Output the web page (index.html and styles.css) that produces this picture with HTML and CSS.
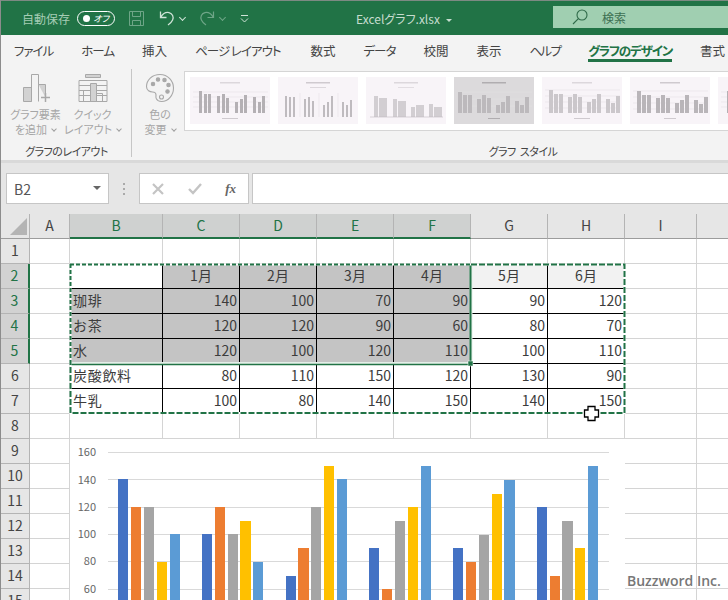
FILE: index.html
```html
<!DOCTYPE html>
<html lang="ja">
<head>
    <meta charset="UTF-8">
    <title>Excelグラフ.xlsx</title>
    <link rel="stylesheet" href="styles.css">
</head>
<body>
<svg class="defs" width="0" height="0">
    <symbol id="thumb-a" viewBox="0 0 80 47">
        <rect x="30" y="5" width="20" height="1.500" fill="#dcd7dc"/>
        <path d="M3 15H78M3 20H78M3 25H78M3 30H78" stroke="#e6e0e6" stroke-width=".6"/>
        <path d="M9 14h3v22H9zM14 17h3v19h-3zM18 17h3v19h-3zM27 19h3v17h-3zM32 17h3v19h-3zM36 21h3v15h-3zM45 25h3v11h-3zM50 22h3v14h-3zM54 18h3v18h-3zM63 20h3v16h-3zM68 25h3v11h-3zM72 19h3v17h-3z" fill="#b4b0b4"/>
        <rect x="32" y="41" width="16" height="1" fill="#cfcacf"/>
    </symbol>
    <symbol id="thumb-b" viewBox="0 0 80 47">
        <rect x="28" y="5" width="24" height="1.500" fill="#cfcacf"/>
        <rect x="32" y="10" width="16" height="1" fill="#dcd7dc"/>
        <path d="M22 16V40M41 16V40M60 16V40" stroke="#e6e0e6" stroke-width=".6"/>
        <path d="M7 19h2v21H7zM11 20h2v20h-2zM15 20h2v20h-2zM26 22h2v18h-2zM30 20h2v20h-2zM34 24h2v16h-2zM45 28h2v12h-2zM49 25h2v15h-2zM53 19h2v21h-2zM64 25h2v15h-2zM68 28h2v12h-2zM72 23h2v17h-2z" fill="#bfbbbf"/>
    </symbol>
    <symbol id="thumb-c" viewBox="0 0 80 47">
        <rect x="28" y="5" width="24" height="1.500" fill="#dcd7dc"/>
        <rect x="32" y="10" width="16" height="1" fill="#e2dde2"/>
        <path d="M8 19h4v21H8zM13 21h8v19h-8zM27 22h4v18h-4zM32 24h8v16h-8zM45 30h4v10h-4zM50 28h8v12h-8zM63 27h4v13h-4zM68 30h8v10h-8z" fill="#d2ced2"/>
        <path d="M4 40H77" stroke="#bfbbbf" stroke-width=".6"/>
    </symbol>
    <symbol id="thumb-d" viewBox="0 0 80 47">
        <rect x="28" y="5" width="24" height="1.500" fill="#b0adb0"/>
        <path d="M4 15H78M4 22H78M4 29H78" stroke="#e2e0e2" stroke-width=".6"/>
        <path d="M4 15h4v21H4zM9 18h4v18H9zM14 18h4v18h-4zM23 22h4v14h-4zM28 18h4v18h-4zM33 21h4v15h-4zM42 28h4v8h-4zM47 25h4v11h-4zM52 19h4v17h-4zM61 24h4v12h-4zM66 28h4v8h-4zM71 20h4v16h-4z" fill="#bcb9bc"/>
        <rect x="34" y="41" width="12" height="1" fill="#b0adb0"/>
    </symbol>
    <symbol id="thumb-e" viewBox="0 0 80 47">
        <rect x="30" y="5" width="20" height="1.500" fill="#dcd7dc"/>
        <path d="M3 13H78M3 19H78M3 25H78M3 31H78" stroke="#e6e0e6" stroke-width=".6"/>
        <path d="M7 13h4v23H7zM12 17h4v19h-4zM17 17h4v19h-4zM26 20h4v16h-4zM31 17h4v19h-4zM36 20h4v16h-4zM45 25h4v11h-4zM50 22h4v14h-4zM55 17h4v19h-4zM64 22h4v14h-4zM69 26h4v10h-4zM74 19h4v17h-4z" fill="#cbc7cb"/>
        <rect x="32" y="41" width="16" height="1" fill="#cfcacf"/>
    </symbol>
    <symbol id="thumb-f" viewBox="0 0 80 47">
        <rect x="30" y="5" width="20" height="1.500" fill="#cfcacf"/>
        <path d="M3 14H78M3 20H78M3 26H78M3 32H78" stroke="#e6e0e6" stroke-width=".6"/>
        <path d="M7 14h4v22H7zM12 18h4v18h-4zM17 18h4v18h-4zM26 21h4v15h-4zM31 18h4v18h-4zM36 21h4v15h-4zM45 26h4v10h-4zM50 23h4v13h-4zM55 18h4v18h-4zM64 23h4v13h-4zM69 27h4v9h-4zM74 20h4v16h-4z" fill="#b9b5b9"/>
        <rect x="34" y="41" width="12" height="1" fill="#cfcacf"/>
    </symbol>
</svg>

<div class="window">
    <header class="titlebar">
        <span class="autosave">自動保存</span>
        <span class="toggle"><i class="toggle-dot"></i><b>オフ</b></span>
        <svg class="qat save" width="17" height="17" viewBox="0 0 17 17" fill="none" stroke="#6ea587"><path d="M1.500 1.500h14v14h-14zM4.500 1.500v5h8v-5M4.500 15.500v-5h8v5"/></svg>
        <svg class="qat undo" width="16" height="16" viewBox="0 0 16 16" fill="none" stroke="#cfe3d7" stroke-width="1.300"><path d="M1.500 1.500v6h6M1.800 7.200C4 3.500 7 2 10 2.600c3.500.8 5 4.300 3.600 7.400-.8 1.800-2.400 3.500-4.600 5"/></svg>
        <span class="chev light"></span>
        <svg class="qat redo" width="16" height="16" viewBox="0 0 16 16" fill="none" stroke="#6ea587" stroke-width="1.200"><path d="M14.500 1.500v6h-6M14.200 7.200C12 3.500 9 2 6 2.600 2.500 3.400 1 6.900 2.400 10c.8 1.800 2.400 3.500 4.600 5"/></svg>
        <span class="chev dim"></span>
        <svg class="qat more" width="9" height="9" viewBox="0 0 9 9" fill="none" stroke="#cfe3d7"><path d="M1 1.500h7"/><path d="M1 4.500l3.500 3.500 3.500-3.500"/></svg>
        <span class="doc-name">Excelグラフ.xlsx<i class="doc-arrow"></i></span>
        <div class="search">
            <svg width="16" height="16" viewBox="0 0 16 16" fill="none" stroke="#2f6a49" stroke-width="1.100"><circle cx="10" cy="6" r="5"/><path d="M6.400 9.600L1 15"/></svg>
            <span>検索</span>
        </div>
    </header>

    <nav class="tabs">
        <span class="kana">ファイル</span>
        <span class="kana">ホーム</span>
        <span>挿入</span>
        <span class="kana-long">ページ レイアウト</span>
        <span>数式</span>
        <span class="kana">データ</span>
        <span>校閲</span>
        <span>表示</span>
        <span class="kana-tight">ヘルプ</span>
        <span class="active">グラフのデザイン</span>
        <span>書式</span>
    </nav>

    <section class="ribbon">
        <div class="group layout-group">
            <div class="group-body">
                <div class="big-btn wide">
                    <svg width="30" height="30" viewBox="0 0 30 30" fill="none" stroke="#a8a8a8">
                        <path d="M2.500 14.500h8v14h-8z" fill="#d2d2d2"/>
                        <path d="M10.500 28.500v-27h7v27"/>
                        <path d="M17.500 11.500h7v13" fill="#d2d2d2"/>
                        <path d="M20 24.500h9M24.500 20v9" stroke-width="1.500"/>
                    </svg>
                    <span>グラフ要素<br>を追加<i class="chev grey"></i></span>
                </div>
                <div class="big-btn wide">
                    <svg width="30" height="30" viewBox="0 0 30 30" fill="none" stroke="#a8a8a8">
                        <path d="M7.500 1.500h15v3h-15z" fill="#d2d2d2"/>
                        <path d="M1 7.500h28M1 12.500h28M1 17.500h28M1 22.500h28M1 28.500h28M1 7.500v21M29 7.500v21"/>
                        <path d="M12.500 10.500h6v18h-6z" fill="#d2d2d2"/>
                        <path d="M5.500 17.500h7v11h-7zM18.500 20.500h6v8h-6z"/>
                    </svg>
                    <span>クイック<br>レイアウト<i class="chev grey"></i></span>
                </div>
            </div>
            <div class="group-label">グラフのレイアウト</div>
        </div>
        <div class="group style-group">
            <div class="group-body">
                <div class="big-btn narrow">
                    <svg width="30" height="30" viewBox="0 0 30 30" fill="none" stroke="#a8a8a8" stroke-width="1.100">
                        <path d="M15 1.500C7 1.500 1.500 7 1.500 13.500c0 4 3.500 5.500 6 5.500 2 0 3.500 1 3.500 3 0 1.500-.5 2.500.5 4 1 1.700 3 2.500 5 2.500 7 0 12-6.500 12-13.500S23 1.500 15 1.500z"/>
                        <circle cx="8" cy="11" r="1.700" fill="#a8a8a8"/>
                        <circle cx="13" cy="6.500" r="1.700" fill="#a8a8a8"/>
                        <circle cx="19.500" cy="7" r="1.700" fill="#a8a8a8"/>
                        <circle cx="23.500" cy="12" r="1.700" fill="#a8a8a8"/>
                        <circle cx="22.500" cy="18.500" r="1.700" fill="#a8a8a8"/>
                        <circle cx="16.500" cy="24" r="2"/>
                    </svg>
                    <span>色の<br>変更<i class="chev grey"></i></span>
                </div>
                <div class="gallery">
                    <svg class="thumb"><use href="#thumb-a"/></svg>
                    <svg class="thumb"><use href="#thumb-b"/></svg>
                    <svg class="thumb"><use href="#thumb-c"/></svg>
                    <svg class="thumb dark"><use href="#thumb-d"/></svg>
                    <svg class="thumb"><use href="#thumb-e"/></svg>
                    <svg class="thumb"><use href="#thumb-f"/></svg>
                    <svg class="thumb"><use href="#thumb-a"/></svg>
                </div>
            </div>
            <div class="group-label">グラフ スタイル</div>
        </div>
    </section>

    <section class="formula-bar">
        <div class="name-box">B2<i class="name-arrow"></i></div>
        <div class="grip"></div>
        <div class="fx-box">
            <svg width="12" height="12" viewBox="0 0 12 12" stroke="#c4c4c4" stroke-width="2.200" fill="none"><path d="M1 1l10 10M11 1L1 11"/></svg>
            <svg width="14" height="12" viewBox="0 0 14 12" stroke="#c4c4c4" stroke-width="2.400" fill="none"><path d="M1 6l4 4 8-9"/></svg>
            <span class="fx">fx</span>
        </div>
        <div class="formula-input"></div>
    </section>

    <section class="sheet">
        <div class="grid">
            <div class="corner"><i class="corner-mark"></i></div>
            <div class="col">A</div><div class="col sel">B</div><div class="col sel">C</div><div class="col sel">D</div><div class="col sel">E</div><div class="col sel">F</div><div class="col">G</div><div class="col">H</div><div class="col">I</div><div class="col"></div>

            <div class="row-no">1</div>
            <div></div><div></div><div></div><div></div><div></div><div></div><div></div><div></div><div></div><div></div>

            <div class="row-no sel">2</div>
            <div></div><div class="d"></div><div class="d g ctr">1月</div><div class="d g ctr">2月</div><div class="d g ctr">3月</div><div class="d g ctr">4月</div><div class="d l ctr">5月</div><div class="d l ctr">6月</div><div></div><div></div>

            <div class="row-no sel">3</div>
            <div></div><div class="d g name">珈琲</div><div class="d g">140</div><div class="d g">100</div><div class="d g">70</div><div class="d g">90</div><div class="d">90</div><div class="d">120</div><div></div><div></div>

            <div class="row-no sel">4</div>
            <div></div><div class="d g name">お茶</div><div class="d g">120</div><div class="d g">120</div><div class="d g">90</div><div class="d g">60</div><div class="d">80</div><div class="d">70</div><div></div><div></div>

            <div class="row-no sel">5</div>
            <div></div><div class="d g name">水</div><div class="d g">120</div><div class="d g">100</div><div class="d g">120</div><div class="d g">110</div><div class="d">100</div><div class="d">110</div><div></div><div></div>

            <div class="row-no">6</div>
            <div></div><div class="d name">炭酸飲料</div><div class="d">80</div><div class="d">110</div><div class="d">150</div><div class="d">120</div><div class="d">130</div><div class="d">90</div><div></div><div></div>

            <div class="row-no">7</div>
            <div></div><div class="d name">牛乳</div><div class="d">100</div><div class="d">80</div><div class="d">140</div><div class="d">150</div><div class="d">140</div><div class="d">150</div><div></div><div></div>

            <div class="row-no">8</div>
            <div></div><div></div><div></div><div></div><div></div><div></div><div></div><div></div><div></div><div></div>
            <div class="row-no">9</div>
            <div></div><div></div><div></div><div></div><div></div><div></div><div></div><div></div><div></div><div></div>
            <div class="row-no">10</div>
            <div></div><div></div><div></div><div></div><div></div><div></div><div></div><div></div><div></div><div></div>
            <div class="row-no">11</div>
            <div></div><div></div><div></div><div></div><div></div><div></div><div></div><div></div><div></div><div></div>
            <div class="row-no">12</div>
            <div></div><div></div><div></div><div></div><div></div><div></div><div></div><div></div><div></div><div></div>
            <div class="row-no">13</div>
            <div></div><div></div><div></div><div></div><div></div><div></div><div></div><div></div><div></div><div></div>
            <div class="row-no">14</div>
            <div></div><div></div><div></div><div></div><div></div><div></div><div></div><div></div><div></div><div></div>
            <div class="row-no">15</div>
            <div></div><div></div><div></div><div></div><div></div><div></div><div></div><div></div><div></div><div></div>
        </div>

        <svg class="chart" viewBox="70 439 555 161">
            <rect x="70" y="439" width="555" height="161" fill="#fff"/>
            <path d="M108 452.500H609M108 479.500H609M108 507.500H609M108 534.500H609M108 561.500H609M108 589.500H609" stroke="#d9d9d9"/>
            <g class="axis" text-anchor="end">
                <text x="96" y="456">160</text>
                <text x="96" y="484">140</text>
                <text x="96" y="511">120</text>
                <text x="96" y="538">100</text>
                <text x="96" y="565">80</text>
                <text x="96" y="593">60</text>
            </g>
            <g fill="#4472c4">
                <rect x="118" y="479" width="10" height="121"/>
                <rect x="202" y="534" width="10" height="66"/>
                <rect x="286" y="576" width="10" height="24"/>
                <rect x="369" y="548" width="10" height="52"/>
                <rect x="453" y="548" width="10" height="52"/>
                <rect x="537" y="507" width="10" height="93"/>
            </g>
            <g fill="#ed7d31">
                <rect x="131" y="507" width="10" height="93"/>
                <rect x="215" y="507" width="10" height="93"/>
                <rect x="298" y="548" width="11" height="52"/>
                <rect x="382" y="589" width="10" height="11"/>
                <rect x="466" y="562" width="10" height="38"/>
                <rect x="550" y="576" width="10" height="24"/>
            </g>
            <g fill="#a5a5a5">
                <rect x="144" y="507" width="10" height="93"/>
                <rect x="228" y="534" width="10" height="66"/>
                <rect x="311" y="507" width="10" height="93"/>
                <rect x="395" y="521" width="10" height="79"/>
                <rect x="479" y="535" width="10" height="65"/>
                <rect x="562" y="521" width="11" height="79"/>
            </g>
            <g fill="#ffc000">
                <rect x="157" y="562" width="10" height="38"/>
                <rect x="240" y="521" width="11" height="79"/>
                <rect x="324" y="466" width="10" height="134"/>
                <rect x="408" y="507" width="10" height="93"/>
                <rect x="492" y="494" width="10" height="106"/>
                <rect x="575" y="548" width="10" height="52"/>
            </g>
            <g fill="#5b9bd5">
                <rect x="170" y="534" width="10" height="66"/>
                <rect x="253" y="562" width="10" height="38"/>
                <rect x="337" y="479" width="10" height="121"/>
                <rect x="421" y="466" width="10" height="134"/>
                <rect x="504" y="480" width="11" height="120"/>
                <rect x="588" y="466" width="10" height="134"/>
            </g>
        </svg>

        <svg class="overlay" viewBox="0 214 728 386" fill="none">
            <path d="M471 264.500V363.500H70" stroke="#e4efe8" stroke-width="3"/>
            <path d="M470.500 264V362" stroke="#217346" stroke-width="2"/>
            <path d="M70 364.500H470" stroke="#217346" stroke-width="1.500"/>
            <path d="M70 264.500H624.500V413H70.500V264" stroke="#fff" stroke-width="2"/>
            <path d="M70 264.500H471M70.500 264V364" stroke="#217346" stroke-width="2" stroke-dasharray="4 2"/>
            <path d="M471 264.500H624.500V413H70.500V364" stroke="#217346" stroke-width="2" stroke-dasharray="6 2"/>
            <rect x="468" y="361" width="5" height="5" fill="#217346" stroke="#fff" stroke-width=".5"/>
            <path d="M588 406.500h7v3.500h3.500v7H595v3.500h-7V417h-3.500v-7H588z" fill="#fff" stroke="#000" stroke-width="1.300"/>
        </svg>

        <div class="watermark">Buzzword Inc.</div>
    </section>
</div>
</body>
</html>
```

FILE: styles.css
```css
* {
    box-sizing: border-box;
}

html, body {
    margin: 0;
    padding: 0;
    height: 600px;
    overflow: hidden;
    background-color: #fff;
}

body {
    font-family: "Noto Sans CJK JP", "Noto Sans", sans-serif;
    font-weight: 400;
    color: #444;
}

i {
    font-style: normal;
}

.defs {
    position: absolute;
}

.window {
    width: 728px;
    height: 600px;
    overflow: hidden;
    border-left: 1px solid #8c8c8c;
}

/* title bar */
.titlebar {
    height: 35px;
    display: flex;
    align-items: center;
    background-color: #217346;
    border-top: 1px solid #7d8a83;
    color: #cfe3d7;
    font-size: 12px;
    font-feature-settings: "palt";
}

.autosave {
    margin-left: 21px;
    width: 55px;
    color: #a5cdb5;
}

.toggle {
    width: 38px;
    height: 15px;
    display: flex;
    align-items: center;
    justify-content: space-between;
    padding: 0 5px;
    border: 1px solid #fff;
    border-radius: 8px;
    color: #fff;
}

.toggle-dot {
    width: 7px;
    height: 7px;
    border-radius: 50%;
    background-color: #fff;
}

.toggle b {
    font-size: 9px;
    font-weight: 400;
    font-style: italic;
}

.qat {
    flex-shrink: 0;
}

.save {
    margin-left: 13px;
}

.undo {
    margin-left: 14px;
}

.redo {
    margin-left: 14px;
}

.more {
    margin-left: 15px;
}

.chev {
    display: inline-block;
    width: 5px;
    height: 5px;
    border-right: 1px solid #cfe3d7;
    border-bottom: 1px solid #cfe3d7;
    transform: rotate(45deg);
    margin: 0 0 2px 5px;
}

.chev.dim {
    border-color: #6ea587;
}

.chev.grey {
    border-color: #a0a0a0;
    width: 4px;
    height: 4px;
    margin: 0 0 3px 5px;
}

.doc-name {
    margin-left: 107px;
    width: 197px;
    white-space: nowrap;
    color: #c6ddcf;
}

.doc-arrow {
    display: inline-block;
    margin: 0 0 2px 6px;
    border-left: 3px solid transparent;
    border-right: 3px solid transparent;
    border-top: 3px solid #c6ddcf;
}

.search {
    flex: 1;
    height: 22px;
    margin-top: -2px;
    display: flex;
    align-items: center;
    gap: 14px;
    padding-left: 19px;
    background-color: #a0cfb1;
    color: #3d6f53;
}

/* tabs */
.tabs {
    height: 36px;
    display: flex;
    align-items: center;
    gap: 28px;
    padding: 0 0 6px 13px;
    background-color: #f3f3f3;
    font-size: 12.500px;
    font-feature-settings: "palt";
    white-space: nowrap;
}

.tabs .kana {
    letter-spacing: -1px;
}

.tabs .kana-tight {
    letter-spacing: -1.700px;
}

.tabs .kana-long {
    letter-spacing: -1px;
    margin-right: 2px;
}

.tabs .active {
    position: relative;
    color: #217346;
    font-weight: 700;
    letter-spacing: -1.200px;
}

.tabs .active::after {
    content: "";
    position: absolute;
    left: 0;
    right: 0;
    bottom: -2px;
    height: 3px;
    background-color: #217346;
}

/* ribbon */
.ribbon {
    height: 92px;
    display: flex;
    background-color: #f3f3f3;
    border-bottom: 3px solid #d9d9d9;
    font-size: 11px;
    font-feature-settings: "palt";
}

.group {
    display: flex;
    flex-direction: column;
    flex-shrink: 0;
}

.group-body {
    height: 69px;
    display: flex;
}

.group-label {
    text-align: center;
    color: #444;
    line-height: 18px;
    padding-top: 2px;
    letter-spacing: -.5px;
    word-spacing: 2px;
}

.layout-group {
    width: 131px;
    position: relative;
}

.layout-group::after {
    content: "";
    position: absolute;
    right: 0;
    top: -2px;
    bottom: 3px;
    width: 1px;
    background-color: #c6c6c6;
}

.layout-group .group-body {
    padding-left: 6px;
}

.style-group {
    width: 782px;
}

.big-btn {
    display: flex;
    flex-direction: column;
    align-items: center;
    padding-top: 2px;
    color: #a6a6a6;
    text-align: center;
    line-height: 15px;
    white-space: nowrap;
}

.big-btn span {
    margin-top: 4px;
}

.big-btn.wide {
    width: 57px;
}

.big-btn.narrow {
    width: 52px;
    padding-left: 4px;
}

.gallery {
    height: 60px;
    display: flex;
    gap: 8px;
    padding: 5px 0 0 5px;
    background-color: #fff;
    border-left: 1px solid #d5d5d5;
    border-top: 1px solid #d5d5d5;
    border-bottom: 1px solid #d5d5d5;
    flex: 1;
}

.thumb {
    flex-shrink: 0;
    width: 80px;
    height: 47px;
    background-color: #f8f4f8;
}

.thumb.dark {
    background-color: #dcdadc;
}

/* formula bar */
.formula-bar {
    height: 51px;
    display: flex;
    align-items: center;
    padding: 0 0 0 5px;
    background-color: #e6e6e6;
}

.name-box {
    position: relative;
    width: 103px;
    height: 31px;
    display: flex;
    align-items: center;
    padding-left: 7px;
    background-color: #fff;
    border: 1px solid #c6c6c6;
    font-size: 14px;
    color: #555;
}

.name-arrow {
    position: absolute;
    right: 7px;
    top: 12px;
    border-left: 4px solid transparent;
    border-right: 4px solid transparent;
    border-top: 4px solid #666;
}

.grip {
    width: 2px;
    height: 12px;
    margin: 0 14px;
    background: repeating-linear-gradient(#aaa 0 2px, transparent 2px 5px);
}

.fx-box {
    width: 110px;
    height: 31px;
    display: flex;
    align-items: center;
    justify-content: space-between;
    padding: 0 12px;
    background-color: #fff;
    border: 1px solid #c6c6c6;
}

.fx {
    font-family: "Liberation Serif", serif;
    font-size: 13px;
    font-weight: 700;
    font-style: italic;
    color: #666;
    line-height: 1;
}

.formula-input {
    flex: 1;
    height: 31px;
    margin-left: 3px;
    background-color: #fff;
    border: 1px solid #c6c6c6;
    border-right: none;
}

/* sheet */
.sheet {
    position: relative;
    height: 386px;
    background-color: #fff;
}

.grid {
    display: grid;
    grid-template-columns: 29px 40px 93px repeat(6, 77px) 72px 32px;
    grid-auto-rows: 25px;
    font-size: 14px;
    color: #3c3c3c;
}

.grid > div {
    border-right: 1px solid #d4d4d4;
    border-bottom: 1px solid #d4d4d4;
    line-height: 22px;
    text-align: right;
    padding-right: 2px;
}

.grid > .corner {
    position: relative;
    background-color: #e6e6e6;
    border-right: 1px solid #b4b4b4;
    border-bottom: 1px solid #9c9c9c;
}

.corner-mark {
    position: absolute;
    left: 9px;
    top: 4px;
    border-left: 17px solid transparent;
    border-bottom: 17px solid #b4b4b4;
}

.grid > .col {
    background-color: #e6e6e6;
    border-right: 1px solid #b4b4b4;
    border-bottom: 1px solid #9c9c9c;
    text-align: center;
    padding: 0;
    color: #444;
}

.grid > .col.sel {
    background-color: #cfd1d0;
    border-bottom: 2px solid #217346;
    color: #217346;
}

.grid > .row-no {
    background-color: #e6e6e6;
    border-right: 1px solid #b4b4b4;
    border-bottom: 1px solid #b4b4b4;
    text-align: center;
    padding: 0;
    color: #444;
}

.grid > .row-no.sel {
    background-color: #d2d2d2;
    border-right: 2px solid #217346;
    color: #217346;
}

.grid > .d {
    border-color: #000;
}

.grid > .g {
    background-color: #c4c4c4;
}

.grid > .l {
    background-color: #f2f2f2;
}

.grid > .ctr {
    text-align: center;
    padding: 0;
}

.grid > .name {
    text-align: left;
    padding: 0 0 0 3px;
    letter-spacing: .7px;
}

.chart {
    position: absolute;
    left: 69px;
    top: 225px;
    width: 555px;
    height: 161px;
}

.axis {
    font-size: 11px;
    fill: #666;
}

.overlay {
    position: absolute;
    left: -1px;
    top: 0;
    width: 728px;
    height: 386px;
}

.watermark {
    position: absolute;
    left: 626px;
    top: 357px;
    font-family: "Open Sans", sans-serif;
    font-size: 14px;
    font-weight: 600;
    color: #777;
    white-space: nowrap;
}
```
